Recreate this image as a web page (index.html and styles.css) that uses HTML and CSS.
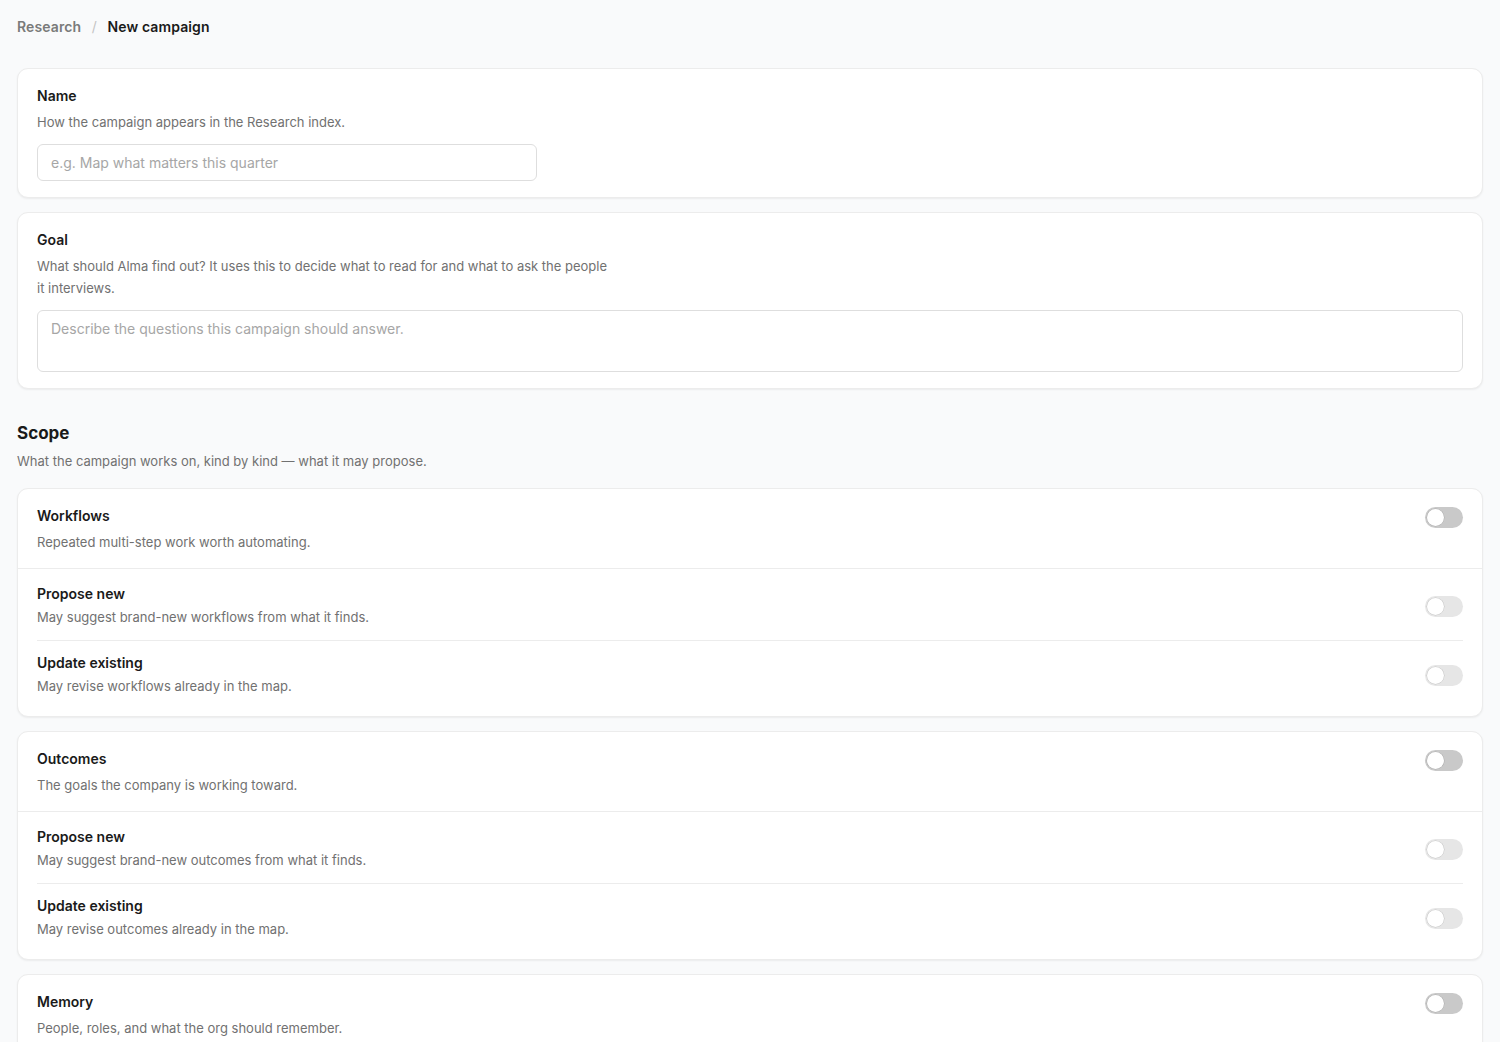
FILE: index.html
```html
<!DOCTYPE html>
<html lang="en">
<head>
    <meta charset="UTF-8">
    <meta name="viewport" content="width=device-width, initial-scale=1.0">
    <title>New campaign</title>
    <link rel="stylesheet" href="styles.css">
</head>
<body>
    <div class="page">
        <nav class="crumbs">
            <span class="crumb-parent">Research</span>
            <span class="crumb-sep">/</span>
            <span class="crumb-current">New campaign</span>
        </nav>

        <section class="card field">
            <label class="field-label" for="name">Name</label>
            <p class="field-help">How the campaign appears in the Research index.</p>
            <input type="text" id="name" class="text-input" placeholder="e.g. Map what matters this quarter">
        </section>

        <section class="card field">
            <label class="field-label" for="goal">Goal</label>
            <p class="field-help goal-help">What should Alma find out? It uses this to decide what to read for and what to ask the people it interviews.</p>
            <textarea id="goal" class="text-area" placeholder="Describe the questions this campaign should answer."></textarea>
        </section>

        <h2 class="section-title">Scope</h2>
        <p class="section-help">What the campaign works on, kind by kind — what it may propose.</p>

        <section class="card scope">
            <div class="scope-head">
                <div>
                    <div class="row-title">Workflows</div>
                    <div class="row-help">Repeated multi-step work worth automating.</div>
                </div>
                <span class="toggle"></span>
            </div>
            <div class="scope-subs">
                <div class="sub-row">
                    <div>
                        <div class="row-title">Propose new</div>
                        <div class="row-help">May suggest brand-new workflows from what it finds.</div>
                    </div>
                    <span class="toggle disabled"></span>
                </div>
                <div class="sub-row">
                    <div>
                        <div class="row-title">Update existing</div>
                        <div class="row-help">May revise workflows already in the map.</div>
                    </div>
                    <span class="toggle disabled"></span>
                </div>
            </div>
        </section>

        <section class="card scope">
            <div class="scope-head">
                <div>
                    <div class="row-title">Outcomes</div>
                    <div class="row-help">The goals the company is working toward.</div>
                </div>
                <span class="toggle"></span>
            </div>
            <div class="scope-subs">
                <div class="sub-row">
                    <div>
                        <div class="row-title">Propose new</div>
                        <div class="row-help">May suggest brand-new outcomes from what it finds.</div>
                    </div>
                    <span class="toggle disabled"></span>
                </div>
                <div class="sub-row">
                    <div>
                        <div class="row-title">Update existing</div>
                        <div class="row-help">May revise outcomes already in the map.</div>
                    </div>
                    <span class="toggle disabled"></span>
                </div>
            </div>
        </section>

        <section class="card scope">
            <div class="scope-head">
                <div>
                    <div class="row-title">Memory</div>
                    <div class="row-help">People, roles, and what the org should remember.</div>
                </div>
                <span class="toggle"></span>
            </div>
        </section>
    </div>
</body>
</html>
```

FILE: styles.css
```css
body {
    margin: 0;
    background: #f9fafb;
    font-family: Inter, "Noto Sans", Arial, sans-serif;
    color: #1a1a1a;
}

.page {
    padding: 17px 17px 40px;
}

.crumbs {
    font-size: 14px;
    line-height: 20px;
    font-weight: 600;
    margin-bottom: 31px;
    letter-spacing: 0.1px;
}
.crumb-parent { color: #7a7a7a; }
.crumb-sep { color: #c4c4c4; font-weight: 400; margin: 0 7px; }
.crumb-current { color: #1a1a1a; }

.card {
    background: #fff;
    border: 1px solid #ececec;
    border-radius: 11px;
    box-shadow: 0 1px 2px rgba(0, 0, 0, 0.06);
    margin-bottom: 14px;
}

.field {
    padding: 17px 19px 16px;
}

.field-label {
    display: block;
    font-size: 14px;
    line-height: 20px;
    font-weight: 600;
}

.field-help {
    margin: 5px 0 11px;
    font-size: 13px;
    line-height: 22px;
    color: #717171;
}
.goal-help {
    max-width: 580px;
}

.text-input,
.text-area {
    display: block;
    box-sizing: border-box;
    border: 1px solid #dedede;
    border-radius: 6px;
    font-family: inherit;
    font-size: 14px;
    color: #1a1a1a;
    background: #fff;
    padding: 0 13px;
}
.text-input {
    width: 500px;
    height: 37px;
}
.text-area {
    width: 100%;
    height: 62px;
    padding-top: 9px;
    resize: none;
}
.text-input::placeholder,
.text-area::placeholder {
    color: #a6a6a6;
}

.section-title {
    margin: 32px 0 0;
    font-size: 17px;
    line-height: 24px;
    font-weight: 700;
}
.section-help {
    margin: 5px 0 16px;
    font-size: 13px;
    line-height: 22px;
    color: #717171;
}

.scope-head {
    display: flex;
    justify-content: space-between;
    align-items: flex-start;
    padding: 17px 19px 15px;
    border-bottom: 1px solid #ececec;
}
.scope-head:last-child {
    border-bottom: none;
    padding-bottom: 40px;
}
.scope-head .row-help {
    margin-top: 5px;
}

.scope-subs {
    padding: 3px 19px 7px;
}

.sub-row {
    display: flex;
    justify-content: space-between;
    align-items: center;
    padding: 12px 0;
}
.sub-row + .sub-row {
    border-top: 1px solid #ececec;
}
.sub-row .row-help {
    margin-top: 2px;
}

.row-title {
    font-size: 14px;
    line-height: 20px;
    font-weight: 600;
}
.row-help {
    font-size: 13px;
    line-height: 22px;
    color: #717171;
}

.toggle {
    position: relative;
    flex: none;
    width: 38px;
    height: 21px;
    border-radius: 11px;
    background: #c9c9c9;
    margin-top: 1px;
}
.toggle::after {
    content: "";
    position: absolute;
    top: 2px;
    left: 2px;
    width: 17px;
    height: 17px;
    border-radius: 50%;
    background: #fff;
    box-shadow: 0 0 0 0.5px rgba(0, 0, 0, 0.15);
}
.toggle.disabled {
    background: #e6e6e6;
    margin-top: 0;
}
```
